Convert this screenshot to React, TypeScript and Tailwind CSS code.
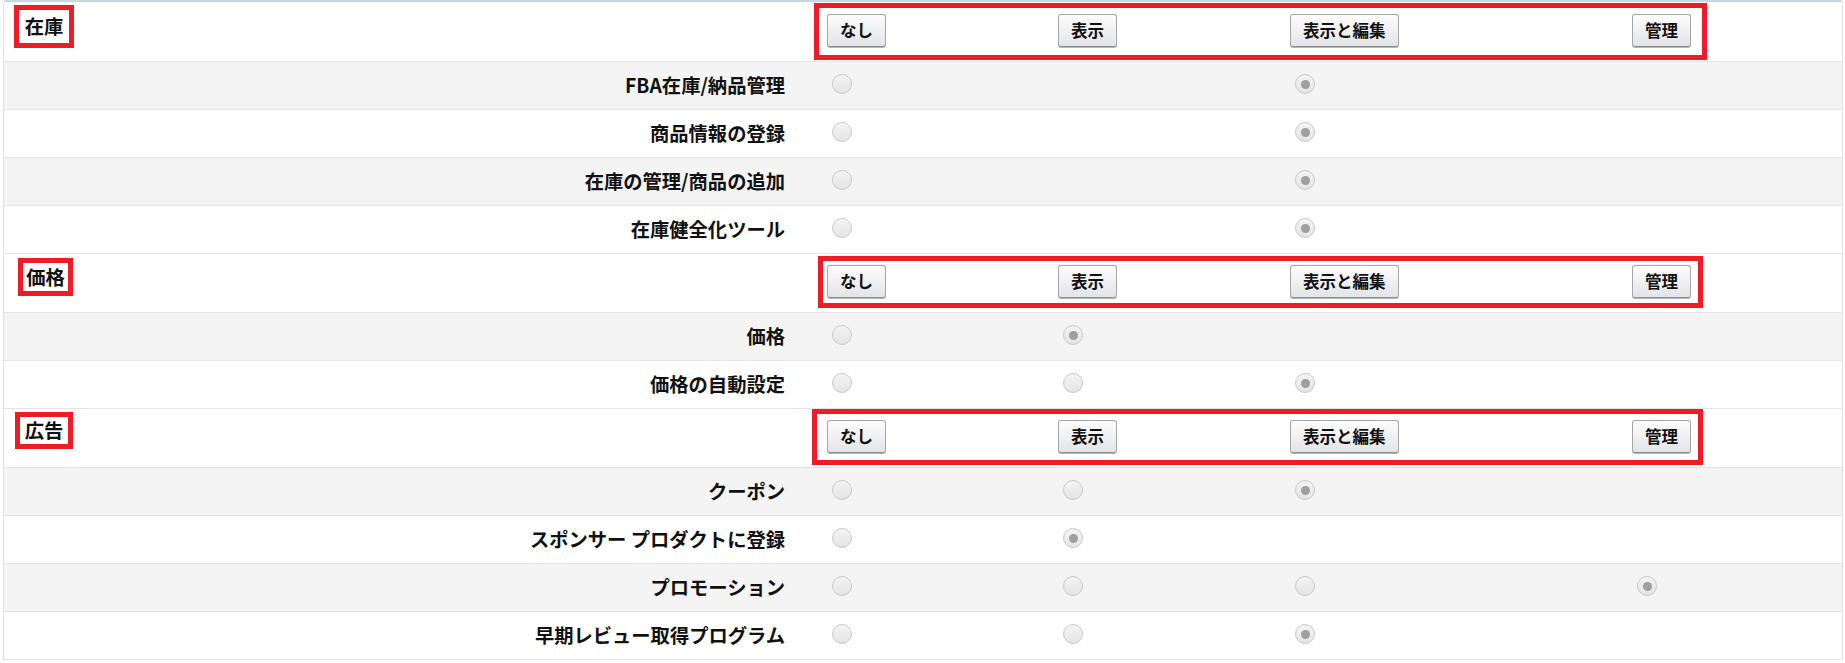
import React from "react";

type Cell = null | boolean;

type Row = { label: string; cells: Cell[] };

type Section = {
  title: string;
  rowClass: string;
  leftClass: string;
  titleClass: string;
  boxClass: string;
  rows: Row[];
};

const sections: Section[] = [
  {
    title: "在庫",
    rowClass: "h-[60px]",
    leftClass: "w-[810px]",
    titleClass: "ml-[10px] mt-[3px] w-[60px] h-[43px]",
    boxClass: "mt-[1px] w-[893px] h-[57px] pl-[8px] pt-[6px]",
    rows: [
      { label: "FBA在庫/納品管理", cells: [false, null, true, null] },
      { label: "商品情報の登録", cells: [false, null, true, null] },
      { label: "在庫の管理/商品の追加", cells: [false, null, true, null] },
      { label: "在庫健全化ツール", cells: [false, null, true, null] },
    ],
  },
  {
    title: "価格",
    rowClass: "h-[59px]",
    leftClass: "w-[814px]",
    titleClass: "ml-[14px] mt-[4px] w-[55px] h-[38px]",
    boxClass: "mt-[2px] w-[885px] h-[52px] pl-[4px] pt-[4px]",
    rows: [
      { label: "価格", cells: [false, true, null, null] },
      { label: "価格の自動設定", cells: [false, false, true, null] },
    ],
  },
  {
    title: "広告",
    rowClass: "h-[59px]",
    leftClass: "w-[808px]",
    titleClass: "ml-[11px] mt-[3px] w-[58px] h-[37px]",
    boxClass: "mt-0 w-[891px] h-[56px] pl-[10px] pt-[6px]",
    rows: [
      { label: "クーポン", cells: [false, false, true, null] },
      { label: "スポンサー プロダクトに登録", cells: [false, true, null, null] },
      { label: "プロモーション", cells: [false, false, false, true] },
      { label: "早期レビュー取得プログラム", cells: [false, false, true, null] },
    ],
  },
];

const levels = ["なし", "表示", "表示と編集", "管理"];

const Radio: React.FC<{ checked: boolean }> = ({ checked }) => (
  <span className="ml-[15px] mb-[3px] flex h-[20px] w-[20px] items-center justify-center rounded-full border border-[#c9c9c9] bg-gradient-to-b from-[#f4f4f4] to-[#e4e4e4]">
    {checked && <span className="h-[9px] w-[9px] rounded-full bg-[#9f9f9f]" />}
  </span>
);

const LevelButton: React.FC<{ text: string }> = ({ text }) => (
  <button
    type="button"
    className="h-[33px] rounded-[3px] border border-[#a6a6a6] border-b-[#8e8e8e] bg-gradient-to-b from-[#fdfdfd] to-[#e3e4e8] px-[12px] text-[16.5px] font-semibold leading-none text-[#111] shadow-[0_1px_0_#b5b5b5]"
  >
    {text}
  </button>
);

export default function App() {
  return (
    <div className="min-h-screen bg-white pl-[3px] pr-[2px] font-[Meiryo,'Noto_Sans_CJK_JP',sans-serif] text-[#111]">
      <div className="rounded-t-[3px] border-x border-t-2 border-x-[#e2e2e2] border-t-[#c6d6e2]">
        {sections.map((section) => (
          <div key={section.title}>
            {/* section header with level buttons */}
            <div className={`flex items-start border-b border-[#e4e4e4] bg-white ${section.rowClass}`}>
              <div className={`shrink-0 ${section.leftClass}`}>
                <div
                  className={`flex items-center justify-center border-[5px] border-[#ee1c25] text-[19.3px] font-bold ${section.titleClass}`}
                >
                  {section.title}
                </div>
              </div>
              <div className={`shrink-0 border-[5px] border-[#ee1c25] ${section.boxClass}`}>
                <div className="grid grid-cols-[231px_232px_342px_1fr]">
                  {levels.map((lv) => (
                    <div key={lv}>
                      <LevelButton text={lv} />
                    </div>
                  ))}
                </div>
              </div>
            </div>

            {section.rows.map((row, i) => (
              <div
                key={row.label}
                className={`grid h-[48px] grid-cols-[813px_231px_232px_342px_1fr] items-center border-b border-[#e4e4e4] ${
                  i % 2 === 0 ? "bg-[#f4f4f4]" : "bg-white"
                }`}
              >
                <div className="pr-[32px] text-right text-[19.3px] font-bold">{row.label}</div>
                {row.cells.map((c, j) => (
                  <div key={j} className="flex items-center">
                    {c !== null && <Radio checked={c} />}
                  </div>
                ))}
              </div>
            ))}
          </div>
        ))}
      </div>
    </div>
  );
}
